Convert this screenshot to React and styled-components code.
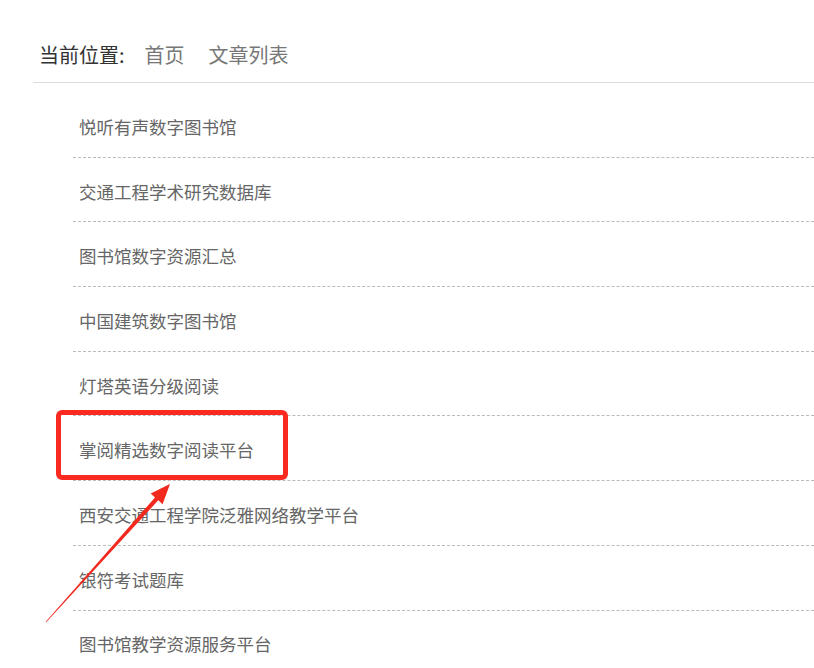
import React from "react";
import styled, { createGlobalStyle } from "styled-components";

const Global = createGlobalStyle`
  body {
    margin: 0;
    background: #fff;
    font-family: "Noto Sans CJK SC", "Microsoft YaHei", sans-serif;
  }
`;

const Page = styled.div`
  position: relative;
  width: 814px;
  height: 668px;
  overflow: hidden;
  padding-left: 33px;
  box-sizing: border-box;
`;

const Crumbs = styled.div`
  display: flex;
  align-items: center;
  padding: 36px 0 8px 6px;
  line-height: 38px;
  font-size: 20px;
  color: #333;
  border-bottom: 1px solid #ddd;
`;

const Crumb = styled.a`
  color: #777;
  text-decoration: none;
  margin-left: ${props => props.gap || "24px"};
`;

const List = styled.ul`
  list-style: none;
  margin: 0 0 0 40px;
  padding: 10px 0 0;
`;

const Item = styled.li`
  display: flex;
  align-items: center;
  box-sizing: border-box;
  height: 64.7px;
  padding: 3px 0 0 6px;
  font-size: 17.5px;
  color: #666;
  border-bottom: 1px dashed #bbb;
`;

const Highlight = styled.div`
  position: absolute;
  left: 56px;
  top: 410px;
  width: 232px;
  height: 70px;
  box-sizing: border-box;
  border: 5px solid #fa2a20;
  border-radius: 6px;
`;

const Arrow = styled.svg`
  position: absolute;
  left: 0;
  top: 0;
  pointer-events: none;
`;

const items = [
  "悦听有声数字图书馆",
  "交通工程学术研究数据库",
  "图书馆数字资源汇总",
  "中国建筑数字图书馆",
  "灯塔英语分级阅读",
  "掌阅精选数字阅读平台",
  "西安交通工程学院泛雅网络教学平台",
  "银符考试题库",
  "图书馆教学资源服务平台"
];

// tapered arrow from bottom-left up to the box
const arrowPoints = (() => {
  const s = [46, 622];
  const t = [170, 484];
  const dx = t[0] - s[0];
  const dy = t[1] - s[1];
  const len = Math.hypot(dx, dy);
  const u = [dx / len, dy / len];
  const n = [-u[1], u[0]];
  const b = [t[0] - 20 * u[0], t[1] - 20 * u[1]];
  const p = (c, k) => `${c[0] + k * n[0]},${c[1] + k * n[1]}`;
  return [p(s, -0.3), p(b, -2.2), p(b, -8), `${t[0]},${t[1]}`, p(b, 8), p(b, 2.2), p(s, 0.3)].join(" ");
})();

export default function App() {
  return (
    <Page>
      <Global />
      <Crumbs>
        当前位置:
        <Crumb href="#" gap="20px">首页</Crumb>
        <Crumb href="#">文章列表</Crumb>
      </Crumbs>
      <List>
        {items.map(t => (
          <Item key={t}>{t}</Item>
        ))}
      </List>
      <Highlight />
      <Arrow width="814" height="668">
        <polygon points={arrowPoints} fill="#f2291f" />
      </Arrow>
    </Page>
  );
}
